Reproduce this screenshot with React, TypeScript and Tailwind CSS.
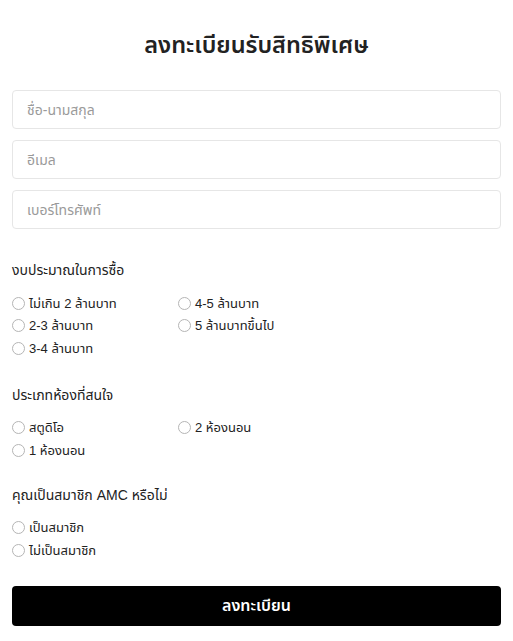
const budgets = ['ไม่เกิน 2 ล้านบาท', '4-5 ล้านบาท', '2-3 ล้านบาท', '5 ล้านบาทขึ้นไป', '3-4 ล้านบาท'];
const rooms = ['สตูดิโอ', '2 ห้องนอน', '1 ห้องนอน'];
const members = ['เป็นสมาชิก', 'ไม่เป็นสมาชิก'];

function Radio({ name, label }: { name: string; label: string }) {
  return (
    <label className="flex items-center gap-1 h-[22.5px] text-[13px] text-[#222]">
      <input type="radio" name={name} className="appearance-none w-[13px] h-[13px] rounded-full border border-[#b5b5b5] bg-white shrink-0" />
      <span>{label}</span>
    </label>
  );
}

function Group({ title, name, items, cols, className }: { title: string; name: string; items: string[]; cols: number; className: string }) {
  return (
    <div className={className}>
      <h3 className="text-[14px] text-[#222] leading-5 mb-[12px]">{title}</h3>
      <div className={cols === 2 ? 'grid grid-cols-[166px_1fr]' : 'flex flex-col'}>
        {items.map((it) => (
          <Radio key={it} name={name} label={it} />
        ))}
      </div>
    </div>
  );
}

export default function App() {
  return (
    <div className="min-h-screen bg-white px-3 pt-[30px] font-['Liberation_Sans','Noto_Sans_Thai',sans-serif]">
      <h1 className="text-center text-[23.5px] font-semibold text-[#222] leading-[30px]">ลงทะเบียนรับสิทธิพิเศษ</h1>

      <div className="mt-[30px] flex flex-col gap-[11px]">
        <input className="h-[39px] w-full rounded border border-[#e6e6e6] px-[14px] text-[14px] placeholder:text-[#9a9a9a] outline-none" placeholder="ชื่อ-นามสกุล" />
        <input className="h-[39px] w-full rounded border border-[#e6e6e6] px-[14px] text-[14px] placeholder:text-[#9a9a9a] outline-none" placeholder="อีเมล" />
        <input className="h-[39px] w-full rounded border border-[#e6e6e6] px-[14px] text-[14px] placeholder:text-[#9a9a9a] outline-none" placeholder="เบอร์โทรศัพท์" />
      </div>

      <Group className="mt-[31px]" title="งบประมาณในการซื้อ" name="budget" items={budgets} cols={2} />
      <Group className="mt-[25px]" title="ประเภทห้องที่สนใจ" name="room" items={rooms} cols={2} />
      <Group className="mt-[23px]" title="คุณเป็นสมาชิก AMC หรือไม่" name="member" items={members} cols={1} />

      <button className="mt-[24px] h-[40px] w-full rounded bg-black text-white text-[16px] font-semibold">ลงทะเบียน</button>
    </div>
  );
}
